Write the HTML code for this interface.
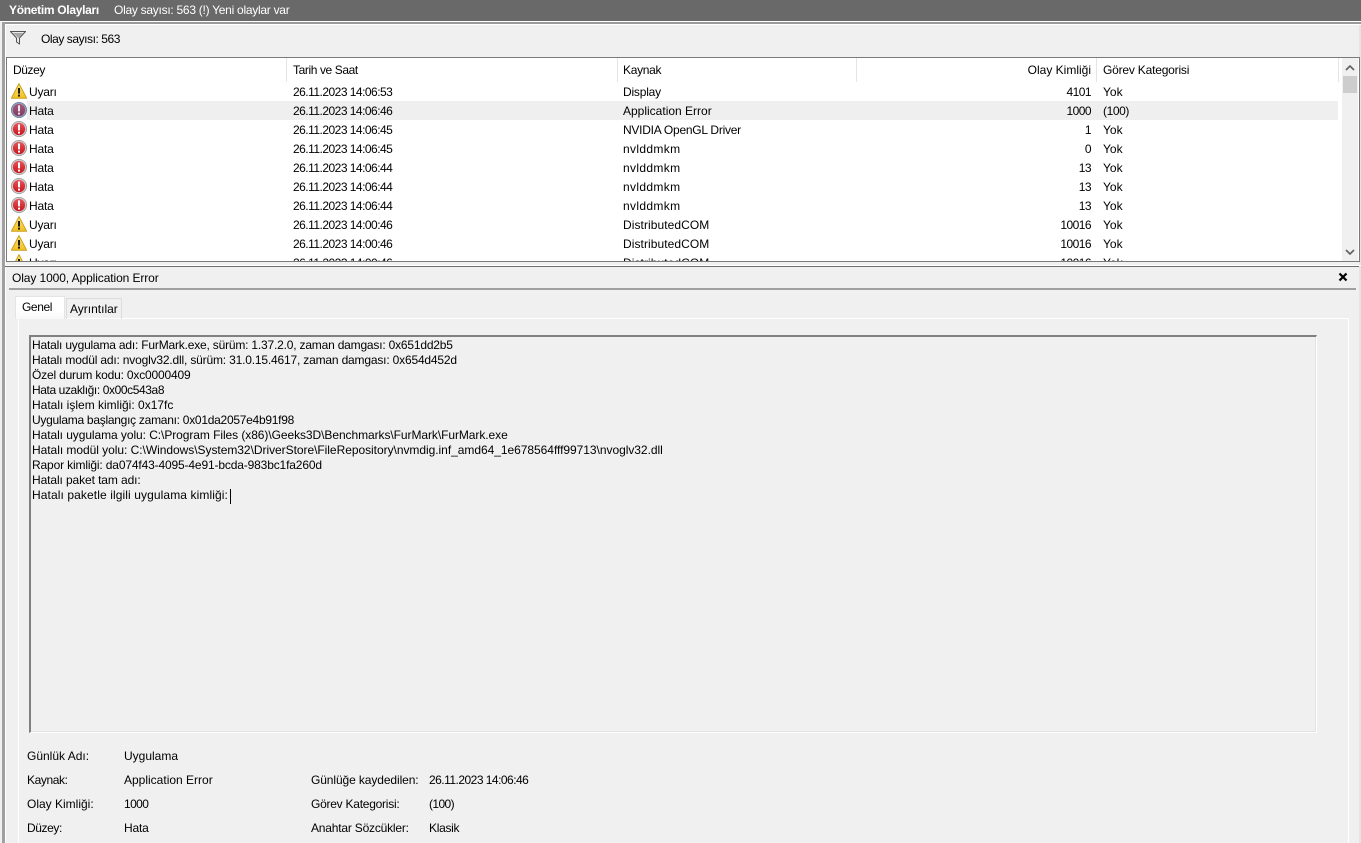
<!DOCTYPE html>
<html><head><meta charset="utf-8"><style>
html,body{margin:0;padding:0;width:1361px;height:843px;overflow:hidden;background:#f0f0f0}
body{position:relative;font:12px/16px "Liberation Sans",sans-serif;color:#000}
.a{position:absolute}
.t{position:absolute;white-space:nowrap;line-height:16px}
.r{text-align:right}
.d{letter-spacing:-.52px}
.n{letter-spacing:-.55px}
.h{letter-spacing:-.2px}
svg{position:absolute;display:block}
.l{display:block;height:15px;line-height:15px;white-space:nowrap}
</style></head><body>
<svg width="0" height="0" style="position:absolute"><defs>
<linearGradient id="gw" x1="0" y1="0" x2="0" y2="1"><stop offset="0" stop-color="#fbe37a"/><stop offset="1" stop-color="#f2c01e"/></linearGradient>
<linearGradient id="ge" x1="0" y1="0" x2="0" y2="1"><stop offset="0" stop-color="#e8555a"/><stop offset="1" stop-color="#c8141c"/></linearGradient>
<linearGradient id="gs" x1="0" y1="0" x2="0" y2="1"><stop offset="0" stop-color="#a8587a"/><stop offset="1" stop-color="#7e3c60"/></linearGradient>
<symbol id="w" viewBox="0 0 16 16"><path d="M8 .6 15.6 15.2H.4z" fill="url(#gw)" stroke="#c9a020" stroke-linejoin="round"/><rect x="7" y="5" width="2" height="5.6" fill="#1a1a1a"/><rect x="7" y="11.6" width="2" height="2" fill="#1a1a1a"/></symbol>
<symbol id="e" viewBox="0 0 16 16"><circle cx="8" cy="8" r="7.6" fill="#d0ccce" stroke="#9a9698" stroke-width=".8"/><circle cx="8" cy="8" r="6.1" fill="url(#ge)"/><rect x="7" y="3.4" width="2" height="6" fill="#fff"/><rect x="7" y="10.6" width="2" height="2" fill="#fff"/></symbol>
<symbol id="s" viewBox="0 0 16 16"><circle cx="8" cy="8" r="7.6" fill="#8fa0bd" stroke="#6a7c9c" stroke-width=".8"/><circle cx="8" cy="8" r="6.1" fill="url(#gs)"/><rect x="7" y="3.4" width="2" height="6" fill="#ece6ee"/><rect x="7" y="10.6" width="2" height="2" fill="#ece6ee"/></symbol>
</defs></svg>

<div class="a" style="left:0;top:0;width:1361px;height:21px;background:#696969"></div>
<div class="t" style="left:9px;top:2px;color:#fff;font-weight:bold;letter-spacing:-.3px">Yönetim Olayları</div>
<div class="t" style="left:114px;top:2px;color:#fff;letter-spacing:-.27px">Olay sayısı: 563 (!) Yeni olaylar var</div>
<div class="a" style="left:0;top:21px;width:1361px;height:1px;background:#fff"></div>
<div class="a" style="left:2px;top:22px;width:1359px;height:3px;background:#9a9a9a"></div>
<div class="a" style="left:5px;top:24px;width:1356px;height:1px;background:#fff"></div>
<div class="a" style="left:2px;top:22px;width:3px;height:821px;background:#a0a0a0"></div>
<div class="a" style="left:5px;top:24px;width:1px;height:819px;background:#fff"></div>
<div class="a" style="left:1359px;top:25px;width:2px;height:818px;background:#e4e4e4"></div>

<svg style="left:10px;top:31px" width="16" height="14" viewBox="0 0 16 14"><path d="M.5.5h15L9.5 7v6l-3-2V7z" fill="#e8e8e8" stroke="#555"/><path d="M3 2h10L8.5 7z" fill="#a8a8a8"/></svg>
<div class="t" style="left:41px;top:31px;letter-spacing:-.44px">Olay sayısı: 563</div>

<div class="a" style="left:6px;top:57px;width:1352px;height:203px;border:1px solid #7a7a7a;background:#fff;overflow:hidden">
  <div class="a" style="left:1335px;top:0;width:16px;height:203px;background:#f0f0f0"></div>
  <div class="a" style="left:1336px;top:18px;width:14px;height:17px;background:#cdcdcd"></div>
  <svg style="left:1338px;top:7px" width="10" height="6"><path d="M1 5 5 1l4 4" fill="none" stroke="#606060" stroke-width="1.6"/></svg>
  <svg style="left:1338px;top:191px" width="10" height="6"><path d="M1 1l4 4 4-4" fill="none" stroke="#606060" stroke-width="1.6"/></svg>
  <div class="a" style="left:279px;top:0;width:1px;height:24px;background:#e5e5e5"></div>
  <div class="a" style="left:610px;top:0;width:1px;height:24px;background:#e5e5e5"></div>
  <div class="a" style="left:849px;top:0;width:1px;height:24px;background:#e5e5e5"></div>
  <div class="a" style="left:1089px;top:0;width:1px;height:24px;background:#e5e5e5"></div>
  <div class="a" style="left:1331px;top:0;width:1px;height:24px;background:#e5e5e5"></div>
  <div class="t" style="left:6px;top:4px;letter-spacing:-.4px">Düzey</div>
  <div class="t" style="left:286px;top:4px;letter-spacing:-.4px">Tarih ve Saat</div>
  <div class="t" style="left:616px;top:4px;letter-spacing:-.3px">Kaynak</div>
  <div class="t r" style="left:884px;width:200px;top:4px">Olay Kimliği</div>
  <div class="t" style="left:1096px;top:4px;letter-spacing:-.2px">Görev Kategorisi</div>

  <div class="a" style="left:20px;top:43px;width:1311px;height:19px;background:#efefef"></div>

  <svg style="left:4px;top:25px" width="16" height="16"><use href="#w"/></svg>
  <div class="t h" style="left:22px;top:26px">Uyarı</div><div class="t d" style="left:286px;top:26px">26.11.2023 14:06:53</div><div class="t h" style="left:616px;top:26px">Display</div><div class="t r n" style="left:984px;width:100px;top:26px">4101</div><div class="t" style="left:1096px;top:26px">Yok</div>

  <svg style="left:4px;top:44px" width="16" height="16"><use href="#s"/></svg>
  <div class="t h" style="left:22px;top:45px">Hata</div><div class="t d" style="left:286px;top:45px">26.11.2023 14:06:46</div><div class="t" style="left:616px;top:45px">Application Error</div><div class="t r n" style="left:984px;width:100px;top:45px">1000</div><div class="t" style="left:1096px;top:45px;letter-spacing:-.4px">(100)</div>

  <svg style="left:4px;top:63px" width="16" height="16"><use href="#e"/></svg>
  <div class="t h" style="left:22px;top:64px">Hata</div><div class="t d" style="left:286px;top:64px">26.11.2023 14:06:45</div><div class="t" style="left:616px;top:64px;letter-spacing:-.25px">NVIDIA OpenGL Driver</div><div class="t r n" style="left:984px;width:100px;top:64px">1</div><div class="t" style="left:1096px;top:64px">Yok</div>

  <svg style="left:4px;top:82px" width="16" height="16"><use href="#e"/></svg>
  <div class="t h" style="left:22px;top:83px">Hata</div><div class="t d" style="left:286px;top:83px">26.11.2023 14:06:45</div><div class="t" style="left:616px;top:83px;letter-spacing:.35px">nvlddmkm</div><div class="t r n" style="left:984px;width:100px;top:83px">0</div><div class="t" style="left:1096px;top:83px">Yok</div>

  <svg style="left:4px;top:101px" width="16" height="16"><use href="#e"/></svg>
  <div class="t h" style="left:22px;top:102px">Hata</div><div class="t d" style="left:286px;top:102px">26.11.2023 14:06:44</div><div class="t" style="left:616px;top:102px;letter-spacing:.35px">nvlddmkm</div><div class="t r n" style="left:984px;width:100px;top:102px">13</div><div class="t" style="left:1096px;top:102px">Yok</div>

  <svg style="left:4px;top:120px" width="16" height="16"><use href="#e"/></svg>
  <div class="t h" style="left:22px;top:121px">Hata</div><div class="t d" style="left:286px;top:121px">26.11.2023 14:06:44</div><div class="t" style="left:616px;top:121px;letter-spacing:.35px">nvlddmkm</div><div class="t r n" style="left:984px;width:100px;top:121px">13</div><div class="t" style="left:1096px;top:121px">Yok</div>

  <svg style="left:4px;top:139px" width="16" height="16"><use href="#e"/></svg>
  <div class="t h" style="left:22px;top:140px">Hata</div><div class="t d" style="left:286px;top:140px">26.11.2023 14:06:44</div><div class="t" style="left:616px;top:140px;letter-spacing:.35px">nvlddmkm</div><div class="t r n" style="left:984px;width:100px;top:140px">13</div><div class="t" style="left:1096px;top:140px">Yok</div>

  <svg style="left:4px;top:158px" width="16" height="16"><use href="#w"/></svg>
  <div class="t h" style="left:22px;top:159px">Uyarı</div><div class="t d" style="left:286px;top:159px">26.11.2023 14:00:46</div><div class="t" style="left:616px;top:159px;letter-spacing:.07px">DistributedCOM</div><div class="t r n" style="left:984px;width:100px;top:159px">10016</div><div class="t" style="left:1096px;top:159px">Yok</div>

  <svg style="left:4px;top:177px" width="16" height="16"><use href="#w"/></svg>
  <div class="t h" style="left:22px;top:178px">Uyarı</div><div class="t d" style="left:286px;top:178px">26.11.2023 14:00:46</div><div class="t" style="left:616px;top:178px;letter-spacing:.07px">DistributedCOM</div><div class="t r n" style="left:984px;width:100px;top:178px">10016</div><div class="t" style="left:1096px;top:178px">Yok</div>

  <svg style="left:4px;top:196px" width="16" height="16"><use href="#w"/></svg>
  <div class="t h" style="left:22px;top:197px">Uyarı</div><div class="t d" style="left:286px;top:197px">26.11.2023 14:00:46</div><div class="t" style="left:616px;top:197px;letter-spacing:.07px">DistributedCOM</div><div class="t r n" style="left:984px;width:100px;top:197px">10016</div><div class="t" style="left:1096px;top:197px">Yok</div>
</div>

<div class="a" style="left:5px;top:265px;width:1356px;height:1px;background:#fff"></div>
<div class="a" style="left:5px;top:266px;width:1354px;height:1px;background:#6e6e6e"></div>
<div class="t" style="left:12px;top:270px;letter-spacing:-.1px">Olay 1000, Application Error</div>
<svg style="left:1338px;top:272px" width="10" height="10"><path d="M1.5 1.5l7 7M8.5 1.5l-7 7" stroke="#000" stroke-width="2.2" fill="none"/></svg>
<div class="a" style="left:9px;top:288px;width:1347px;height:2px;background:#a0a0a0"></div>

<div class="a" style="left:18px;top:318px;width:1331px;height:525px;border-top:1px solid #fff;border-right:1px solid #fff;border-left:1px solid #fff;box-sizing:border-box"></div>
<div class="a" style="left:15px;top:296px;width:50px;height:23px;background:linear-gradient(#fff,#fff 60%,#f8f8f8);border:1px solid #e4e4e4;border-bottom:0;box-sizing:border-box"></div>
<div class="t" style="left:22px;top:299px;letter-spacing:-.4px">Genel</div>
<div class="a" style="left:66px;top:298px;width:56px;height:21px;border:1px solid #dcdcdc;border-bottom:0;box-sizing:border-box"></div>
<div class="t" style="left:70px;top:301px">Ayrıntılar</div>

<div class="a" style="left:29px;top:335px;width:1288px;height:398px;box-sizing:border-box;border-top:2px solid #808080;border-left:2px solid #808080;border-right:1px solid #fff;border-bottom:1px solid #fff;box-shadow:inset -1px -1px 0 #e3e3e3"></div>
<div class="a" style="left:32px;top:338px;width:1280px">
<span class="l" style="letter-spacing:-.195px">Hatalı uygulama adı: FurMark.exe, sürüm: 1.37.2.0, zaman damgası: 0x651dd2b5</span>
<span class="l" style="letter-spacing:-.18px">Hatalı modül adı: nvoglv32.dll, sürüm: 31.0.15.4617, zaman damgası: 0x654d452d</span>
<span class="l" style="letter-spacing:-.185px">Özel durum kodu: 0xc0000409</span>
<span class="l" style="letter-spacing:-.4px">Hata uzaklığı: 0x00c543a8</span>
<span class="l">Hatalı işlem kimliği: 0x17fc</span>
<span class="l" style="letter-spacing:-.27px">Uygulama başlangıç zamanı: 0x01da2057e4b91f98</span>
<span class="l" style="letter-spacing:-.07px">Hatalı uygulama yolu: C:\Program Files (x86)\Geeks3D\Benchmarks\FurMark\FurMark.exe</span>
<span class="l" style="letter-spacing:-.04px">Hatalı modül yolu: C:\Windows\System32\DriverStore\FileRepository\nvmdig.inf_amd64_1e678564fff99713\nvoglv32.dll</span>
<span class="l" style="letter-spacing:-.15px">Rapor kimliği: da074f43-4095-4e91-bcda-983bc1fa260d</span>
<span class="l" style="letter-spacing:-.1px">Hatalı paket tam adı:</span>
<span class="l" style="letter-spacing:.1px">Hatalı paketle ilgili uygulama kimliği:</span>
</div>
<div class="a" style="left:230px;top:489px;width:1px;height:15px;background:#000"></div>

<div class="t" style="left:27px;top:748px">Günlük Adı:</div><div class="t" style="left:124px;top:748px">Uygulama</div>
<div class="t" style="left:27px;top:772px;letter-spacing:-.4px">Kaynak:</div><div class="t" style="left:124px;top:772px">Application Error</div>
<div class="t" style="left:311px;top:772px;letter-spacing:-.1px">Günlüğe kaydedilen:</div><div class="t d" style="left:429px;top:772px">26.11.2023 14:06:46</div>
<div class="t" style="left:27px;top:796px">Olay Kimliği:</div><div class="t" style="left:124px;top:796px;letter-spacing:-.6px">1000</div>
<div class="t" style="left:311px;top:796px;letter-spacing:-.25px">Görev Kategorisi:</div><div class="t" style="left:429px;top:796px;letter-spacing:-.6px">(100)</div>
<div class="t" style="left:27px;top:820px;letter-spacing:-.4px">Düzey:</div><div class="t h" style="left:124px;top:820px">Hata</div>
<div class="t" style="left:311px;top:820px;letter-spacing:-.2px">Anahtar Sözcükler:</div><div class="t" style="left:429px;top:820px;letter-spacing:-.3px">Klasik</div>
</body></html>
